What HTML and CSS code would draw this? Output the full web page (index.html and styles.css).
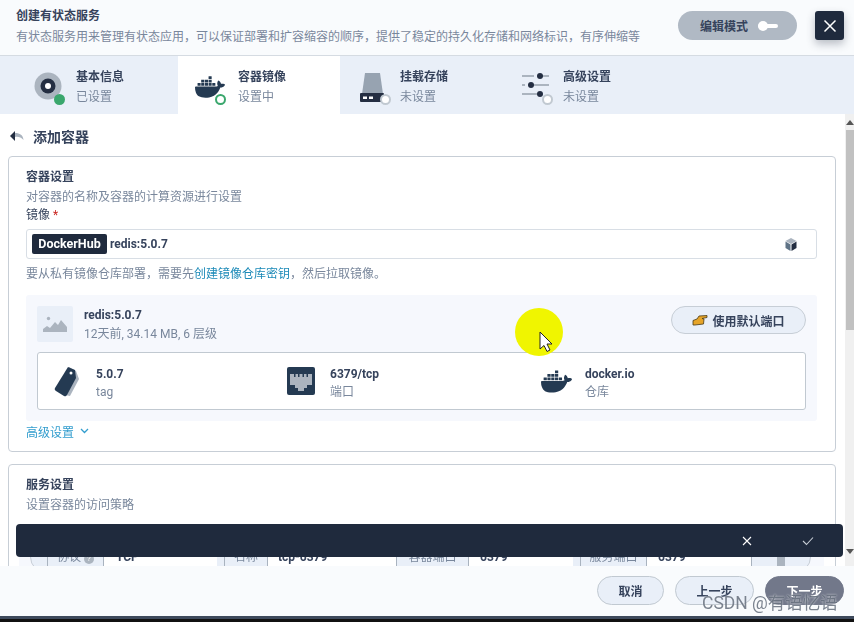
FILE: index.html
```html
<!DOCTYPE html>
<html>
<head>
  <title>创建有状态服务</title>
  <link rel="stylesheet" href="styles.css">
</head>
<body>
  <svg class="defs" width="0" height="0">
    <symbol id="docker" viewBox="0 0 24 24">
      <path d="M13.983 11.078h2.119a.186.186 0 00.186-.185V9.006a.186.186 0 00-.186-.186h-2.119a.185.185 0 00-.185.185v1.888c0 .102.083.185.185.185m-2.954-5.43h2.118a.186.186 0 00.186-.186V3.574a.186.186 0 00-.186-.185h-2.118a.185.185 0 00-.185.185v1.888c0 .102.082.185.185.186m0 2.716h2.118a.187.187 0 00.186-.186V6.29a.186.186 0 00-.186-.185h-2.118a.185.185 0 00-.185.185v1.887c0 .102.082.185.185.186m-2.93 0h2.12a.186.186 0 00.184-.186V6.29a.185.185 0 00-.185-.185H8.1a.185.185 0 00-.185.185v1.887c0 .102.083.185.185.186m-2.964 0h2.119a.186.186 0 00.185-.186V6.29a.185.185 0 00-.185-.185H5.136a.186.186 0 00-.186.185v1.887c0 .102.084.185.186.186m5.893 2.715h2.118a.186.186 0 00.186-.185V9.006a.186.186 0 00-.186-.186h-2.118a.185.185 0 00-.185.185v1.888c0 .102.082.185.185.185m-2.93 0h2.12a.185.185 0 00.184-.185V9.006a.185.185 0 00-.184-.186h-2.12a.185.185 0 00-.184.185v1.888c0 .102.083.185.185.185m-2.964 0h2.119a.185.185 0 00.185-.185V9.006a.185.185 0 00-.184-.186h-2.12a.186.186 0 00-.186.186v1.887c0 .102.084.185.186.185m-2.92 0h2.12a.185.185 0 00.184-.185V9.006a.185.185 0 00-.184-.186h-2.12a.185.185 0 00-.184.185v1.888c0 .102.082.185.185.185M23.763 9.89c-.065-.051-.672-.51-1.954-.51-.338.001-.676.03-1.01.087-.248-1.7-1.653-2.53-1.716-2.566l-.344-.199-.226.327c-.284.438-.49.922-.612 1.43-.23.97-.09 1.882.403 2.661-.595.332-1.55.413-1.744.42H.751a.751.751 0 00-.75.748 11.376 11.376 0 00.692 4.062c.545 1.428 1.355 2.48 2.41 3.124 1.18.723 3.1 1.137 5.275 1.137.983.003 1.963-.086 2.93-.266a12.248 12.248 0 003.823-1.389c.98-.567 1.86-1.288 2.61-2.136 1.252-1.418 1.998-2.997 2.553-4.4h.221c1.372 0 2.215-.549 2.68-1.009.309-.293.55-.65.707-1.046l.098-.288Z"/>
    </symbol>
  </svg>

  <div class="page">
    <header class="head">
      <div class="head-text">
        <div class="head-title">创建有状态服务</div>
        <div class="head-desc">有状态服务用来管理有状态应用，可以保证部署和扩容缩容的顺序，提供了稳定的持久化存储和网络标识，有序伸缩等</div>
      </div>
      <div class="mode-btn">
        <span>编辑模式</span>
        <span class="mode-toggle"></span>
      </div>
      <div class="close-btn">
        <svg width="14" height="14" viewBox="0 0 14 14"><path d="M1.5 1.5l11 11M12.5 1.5l-11 11" stroke="#fff" stroke-width="1.5" fill="none"/></svg>
      </div>
    </header>

    <nav class="tabs">
      <div class="tab tab-first">
        <span class="tab-icon">
          <svg width="30" height="30" viewBox="0 0 30 30"><circle cx="14" cy="14" r="13.5" fill="#abb4bf"/><circle cx="14" cy="14" r="7.5" fill="#242e42"/><circle cx="14" cy="14" r="3" fill="#fff"/></svg>
          <i class="dot dot-done"></i>
        </span>
        <div><div class="tab-name">基本信息</div><div class="tab-state">已设置</div></div>
      </div>
      <div class="tab tab-active">
        <span class="tab-icon">
          <svg class="whale" width="30" height="30"><use href="#docker"/></svg>
          <i class="dot dot-doing"></i>
        </span>
        <div><div class="tab-name">容器镜像</div><div class="tab-state">设置中</div></div>
      </div>
      <div class="tab tab-plain">
        <span class="tab-icon">
          <svg width="30" height="32" viewBox="0 0 30 32"><path d="M5 1h15l3 21H2z" fill="#97a3b1"/><rect x="0" y="21" width="24" height="9" rx="1" fill="#242e42"/><rect x="3" y="24.500" width="4" height="2.500" fill="#fff"/><rect x="9" y="24.500" width="4" height="2.500" fill="#fff"/></svg>
          <i class="dot dot-todo"></i>
        </span>
        <div><div class="tab-name">挂载存储</div><div class="tab-state">未设置</div></div>
      </div>
      <div class="tab tab-plain tab-last">
        <span class="tab-icon">
          <svg width="30" height="30" viewBox="0 0 30 30" fill="none" stroke="#abb4bf" stroke-width="2"><path d="M0 4h12M20 4h7M0 13h3M11 13h16M0 22h15"/><g fill="#242e42" stroke="none"><circle cx="18" cy="4" r="3"/><circle cx="9" cy="13" r="3"/><circle cx="18" cy="22" r="3"/></g></svg>
          <i class="dot dot-todo"></i>
        </span>
        <div><div class="tab-name">高级设置</div><div class="tab-state">未设置</div></div>
      </div>
    </nav>

    <div class="main">
      <div class="scroll-area">
        <div class="back-row">
          <svg width="14" height="10" viewBox="0 0 14 10"><path d="M5 0v10L0 5z" fill="#242e42"/><path d="M5 2c5 0 8 2 8.500 7C11 6 8 5.500 5 6z" fill="#abb4bf"/></svg>
          <span>添加容器</span>
        </div>

        <section class="card card-container">
          <div class="card-title">容器设置</div>
          <div class="card-desc">对容器的名称及容器的计算资源进行设置</div>
          <div class="field-label">镜像 <em>*</em></div>
          <div class="image-input">
            <span class="hub-tag">DockerHub</span>
            <span class="image-value">redis:5.0.7</span>
            <svg class="cube" width="12" height="13" viewBox="0 0 12 13"><path d="M6 0l5.500 3L6 6 .5 3z" fill="#abb4bf"/><path d="M.5 3.500L5.500 6.500V13L.5 10z" fill="#5f7386"/><path d="M11.500 3.500L6.500 6.500V13l5-3z" fill="#242e42"/></svg>
          </div>
          <div class="hint">要从私有镜像仓库部署，需要先<a>创建镜像仓库密钥</a>，然后拉取镜像。</div>

          <div class="image-box">
            <div class="image-top">
              <div class="thumb">
                <svg width="24" height="18" viewBox="0 0 24 18"><circle cx="5.500" cy="3.500" r="1.700" fill="#abb4bf"/><path d="M0 17v-3l4-3 3 2 5-6 3 3 3-5 6 7v5z" fill="#abb4bf"/></svg>
              </div>
              <div class="image-info">
                <div class="strong">redis:5.0.7</div>
                <div class="muted">12天前, 34.14 MB, 6 层级</div>
              </div>
              <div class="port-btn">
                <svg width="16" height="12" viewBox="0 0 16 12"><path d="M1 6.500L5 5l2-3 8-.5V3.500l-5 1 2 .5-.5 5L3 11H1z" fill="#e6a428" stroke="#4a3a14" stroke-width=".8"/></svg>
                <span>使用默认端口</span>
              </div>
            </div>
            <div class="image-meta">
              <div class="meta-item meta-tag">
                <svg width="26" height="31" viewBox="0 0 26 31"><path d="M15 1l7 4 3 8-9 17-5-1z" fill="#abb4bf"/><path d="M14 1l7 3 1 8-9 17c-1 1.500-2 1.500-3 1L2 25c-1.500-1-1.500-2-1-3z" fill="#243a52"/><circle cx="17" cy="7" r="1.500" fill="#fff"/></svg>
                <div class="meta-text"><div class="strong">5.0.7</div><div class="muted">tag</div></div>
              </div>
              <div class="meta-item meta-port">
                <svg width="28" height="28" viewBox="0 0 28 28"><rect width="28" height="28" rx="2" fill="#243a52"/><path d="M3 7h22v11h-5v3h-3v3h-6v-3H8v-3H3z" fill="#abb4bf"/><path d="M7 7h1.500v3H7zM11 7h1.500v3H11zM15.500 7H17v3h-1.500zM19.500 7H21v3h-1.500z" fill="#243a52"/></svg>
                <div class="meta-text"><div class="strong">6379/tcp</div><div class="muted">端口</div></div>
              </div>
              <div class="meta-item meta-repo">
                <svg class="whale" width="31" height="31"><use href="#docker"/></svg>
                <div class="meta-text"><div class="strong">docker.io</div><div class="muted">仓库</div></div>
              </div>
            </div>
          </div>

          <div class="advanced">
            <span>高级设置</span>
            <svg width="9" height="6" viewBox="0 0 9 6"><path d="M1 1l3.500 3.500L8 1" stroke="#329dce" stroke-width="1.300" fill="none"/></svg>
          </div>
        </section>

        <section class="card card-service">
          <div class="card-title">服务设置</div>
          <div class="card-desc">设置容器的访问策略</div>
          <div class="port-wrap">
            <div class="port-row">
              <span class="cell-label label-proto">协议 <i class="help">?</i></span>
              <span class="cell-value value-proto">TCP</span>
              <span class="cell-label label-name">名称</span>
              <span class="cell-value value-name">tcp-6379</span>
              <span class="cell-label label-port">容器端口</span>
              <span class="cell-value value-port">6379</span>
              <span class="cell-label label-svc">服务端口</span>
              <span class="cell-value value-svc">6379</span>
              <span class="cell-del"><i></i></span>
            </div>
          </div>
        </section>
      </div>

      <div class="scrollbar">
        <i class="arrow-up"></i>
        <div class="thumb-bar"></div>
        <i class="arrow-down"></i>
      </div>

      <div class="toast">
        <svg width="10" height="10" viewBox="0 0 10 10"><path d="M1 1l8 8M9 1l-8 8" stroke="#fff" stroke-width="1.100" fill="none"/></svg>
        <svg width="12" height="10" viewBox="0 0 12 10"><path d="M1 5l3.500 3.500L11 1.500" stroke="#c8ced6" stroke-width="1.100" fill="none"/></svg>
      </div>
    </div>

    <footer class="foot">
      <button class="btn">取消</button>
      <button class="btn btn-wide">上一步</button>
      <button class="btn btn-wide btn-next">下一步</button>
    </footer>
    <div class="taskbar"></div>
  </div>

  <div class="cursor-spot">
    <svg width="14" height="22" viewBox="0 0 14 22"><path d="M1 1v17l4-3.500 3 6 3-1.500-3-6h5z" fill="#fff" stroke="#222" stroke-width="1"/></svg>
  </div>
  <div class="watermark">CSDN @有语忆语</div>
</body>
</html>
```

FILE: styles.css
```css
* {
  box-sizing: border-box;
}

html, body {
  height: 100%;
}

body {
  margin: 0;
  overflow: hidden;
  font-family: Roboto, "Noto Sans CJK SC", sans-serif;
  font-size: 12px;
  color: #242e42;
  background: #fff;
}

.defs {
  position: absolute;
}

/* the capture is slightly soft */
.page {
  display: flex;
  flex-direction: column;
  height: 622px;
  filter: blur(0.4px);
}

/* header */
.head {
  display: flex;
  align-items: flex-start;
  flex: none;
  height: 56px;
  padding: 11px 10px 0 16px;
  background: #f9fbfd;
  border-bottom: 1px solid #d5dbe2;
}

.head-text {
  flex: 1;
  margin-top: -4px;
}

.head-title {
  font-weight: 700;
  line-height: 18px;
  color: #36435c;
}

.head-desc {
  margin-top: 3px;
  line-height: 18px;
  color: #79879c;
}

.mode-btn {
  display: flex;
  align-items: center;
  width: 119px;
  height: 29px;
  padding-left: 22px;
  border-radius: 15px;
  background: #b0b9c4;
  font-weight: 700;
  color: #36435c;
}

.mode-toggle {
  position: relative;
  width: 20px;
  height: 4px;
  margin-left: 10px;
  border-radius: 2px;
  background: #fff;
}

.mode-toggle::before {
  content: "";
  position: absolute;
  left: 0;
  top: -3px;
  width: 10px;
  height: 10px;
  border-radius: 50%;
  background: #fff;
}

.close-btn {
  display: flex;
  align-items: center;
  justify-content: center;
  width: 29px;
  height: 29px;
  margin-left: 18px;
  border-radius: 3px;
  background: #1f2a3d;
  box-shadow: 0 4px 8px rgba(36, 46, 66, 0.3);
}

/* steps */
.tabs {
  display: flex;
  flex: none;
  height: 58px;
  background: #e9eff8;
}

.tab {
  display: flex;
  align-items: center;
  gap: 12px;
  width: 162px;
  padding-top: 4px;
  padding-left: 20px;
  line-height: 20px;
}

.tab-first {
  width: 178px;
  padding-left: 34px;
}

.tab-active {
  gap: 13px;
  padding-left: 17px;
  background: #fff;
}

.tab-plain {
  gap: 10px;
}

.tab-last {
  gap: 11px;
}

.tab-icon {
  position: relative;
  display: block;
  width: 30px;
  height: 30px;
}

.tab-name {
  font-weight: 700;
  color: #36435c;
}

.tab-state {
  color: #79879c;
}

.whale {
  fill: #243a52;
}

.dot {
  position: absolute;
  right: -1px;
  bottom: -3px;
  width: 11px;
  height: 11px;
  border-radius: 50%;
}

.dot-done {
  background: #3aa76d;
}

.dot-doing {
  background: #fff;
  border: 2px solid #3aa76d;
}

.dot-todo {
  background: #fff;
  border: 2px solid #c1c9d1;
}

/* main area */
.main {
  position: relative;
  display: flex;
  flex: none;
  height: 452px;
  overflow: hidden;
}

.scroll-area {
  flex: 1;
  padding: 0 9px 0 8px;
  overflow: hidden;
}

.back-row {
  display: flex;
  align-items: center;
  gap: 9px;
  height: 42px;
  padding: 2px 0 0 2px;
  font-size: 14px;
  font-weight: 700;
  color: #36435c;
}

.card {
  padding: 11px 18px 11px 17px;
  border: 1px solid #c7ced6;
  border-radius: 4px;
  background: #fff;
}

.card-container {
  height: 296px;
}

.card-service {
  margin-top: 12px;
  height: 120px;
}

.card-title {
  font-weight: 700;
  line-height: 18px;
  color: #36435c;
}

.card-desc {
  margin-top: 2px;
  line-height: 18px;
  color: #79879c;
}

.field-label {
  line-height: 18px;
  color: #36435c;
}

.field-label em {
  font-style: normal;
  color: #ca2621;
}

.image-input {
  display: flex;
  align-items: center;
  height: 30px;
  margin-top: 5px;
  padding: 0 19px 0 5px;
  border: 1px solid #d8dee5;
  border-radius: 3px;
}

.hub-tag {
  width: 75px;
  height: 20px;
  border-radius: 2px;
  background: #1f2a3d;
  color: #fff;
  font-size: 12.5px;
  font-weight: 700;
  line-height: 20px;
  text-align: center;
}

.image-value {
  flex: 1;
  margin-left: 3px;
  font-weight: 700;
  color: #36435c;
}

.hint {
  margin-top: 6px;
  line-height: 18px;
  color: #79879c;
}

.hint a {
  color: #1c8ab8;
}

.image-box {
  height: 126px;
  margin-top: 12px;
  padding: 11px 11px 0;
  border-radius: 3px;
  background: #f6f8fd;
}

.image-top {
  display: flex;
  align-items: flex-start;
  height: 36px;
}

.thumb {
  display: flex;
  align-items: center;
  justify-content: center;
  width: 36px;
  height: 36px;
  border-radius: 2px;
  background: #e9eff8;
}

.image-info {
  flex: 1;
  margin-left: 11px;
  line-height: 19px;
}

.strong {
  font-weight: 700;
  color: #36435c;
}

.muted {
  color: #79879c;
}

.port-btn {
  display: flex;
  align-items: center;
  justify-content: center;
  gap: 4px;
  width: 135px;
  height: 28px;
  border: 1px solid #c7ced6;
  border-radius: 14px;
  background: #e9eff8;
  font-weight: 700;
  color: #36435c;
}

.image-meta {
  display: flex;
  align-items: center;
  height: 58px;
  margin-top: 10px;
  padding-left: 16px;
  border: 1px solid #c1c9d1;
  border-radius: 3px;
  background: #fff;
  line-height: 18px;
}

.meta-item {
  display: flex;
  align-items: center;
  gap: 16px;
}

.meta-text {
  padding-top: 4px;
}

.meta-tag {
  width: 233px;
}

.meta-port {
  width: 254px;
  gap: 15px;
}

.meta-repo {
  gap: 13px;
}

.advanced {
  display: flex;
  align-items: center;
  gap: 6px;
  height: 20px;
  color: #329dce;
}

/* port row, mostly under the toast */
.port-wrap {
  height: 60px;
  margin: 20px -7px 0 -7px;
  padding: 7px 13px 0 11px;
  background: #f6f8fd;
}

.port-row {
  display: flex;
  align-items: stretch;
  height: 32px;
  padding-left: 16px;
  border: 1px solid #c7ced6;
  border-radius: 16px;
  background: #e9eff8;
  line-height: 20px;
  text-align: center;
}

.cell-label {
  padding-top: 5px;
  border-left: 1px solid #a9b3bf;
  border-right: 1px solid #a9b3bf;
  color: #79879c;
}

.cell-value {
  padding: 5px 0 0 11px;
  background: #fff;
  font-weight: 700;
  text-align: left;
  color: #36435c;
}

.label-proto {
  width: 57px;
}

.value-proto {
  width: 113px;
  margin-right: 7px;
  padding-left: 12px;
}

.label-name {
  width: 44px;
}

.value-name {
  width: 128px;
  padding-left: 10px;
}

.label-port {
  width: 73px;
}

.value-port {
  width: 104px;
  margin-right: 7px;
}

.label-svc {
  width: 67px;
}

.value-svc {
  width: 104px;
}

.cell-del {
  flex: 1;
  display: flex;
  justify-content: center;
  padding-top: 12px;
  border-left: 1px solid #a9b3bf;
}

.cell-del i {
  width: 8px;
  height: 14px;
  background: #abb4bf;
}

.help {
  display: inline-block;
  width: 10px;
  height: 10px;
  border-radius: 50%;
  background: #abb4bf;
  color: #fff;
  font-size: 8px;
  font-style: normal;
  line-height: 10px;
}

.scrollbar {
  display: flex;
  flex-direction: column;
  align-items: flex-end;
  flex: none;
  width: 9px;
  background: #f0f0f0;
}

.arrow-up,
.arrow-down {
  width: 0;
  height: 0;
  margin: 6px 0 5px;
  border-left: 4px solid transparent;
  border-right: 4px solid transparent;
}

.arrow-up {
  border-bottom: 5px solid #555;
}

.arrow-down {
  margin: 0 0 4px;
  border-top: 5px solid #555;
}

.thumb-bar {
  width: 8px;
  height: 200px;
  margin-bottom: 219px;
  background: #c1c1c1;
}

.toast {
  position: absolute;
  left: 16px;
  top: 410px;
  display: flex;
  align-items: center;
  justify-content: flex-end;
  gap: 50px;
  width: 827px;
  height: 33px;
  padding-right: 29px;
  border-radius: 4px;
  background: #1f2a3d;
}

/* footer */
.foot {
  display: flex;
  justify-content: flex-end;
  gap: 11px;
  flex: none;
  height: 50px;
  padding: 10px 10px 0 0;
  background: #f9fbfd;
}

.btn {
  width: 67px;
  height: 29px;
  padding: 0;
  border: 1px solid #c1c9d1;
  border-radius: 15px;
  background: #e9eff8;
  font: 700 12px Roboto, "Noto Sans CJK SC", sans-serif;
  color: #36435c;
}

.btn-wide {
  width: 79px;
}

.btn-next {
  border-color: #72788a;
  background: #72788a;
  color: #fff;
}

.taskbar {
  flex: none;
  height: 6px;
  border-top: 3px solid #3e4a5c;
  background: #111;
}

/* overlays */
.cursor-spot {
  position: absolute;
  left: 515px;
  top: 308px;
  width: 48px;
  height: 48px;
  padding: 23px 0 0 24px;
  border-radius: 50%;
  background: #f0f500;
}

.cursor-spot svg {
  display: block;
}

.watermark {
  position: absolute;
  left: 702px;
  top: 592px;
  font-size: 17.5px;
  line-height: 22px;
  color: rgba(90, 100, 115, 0.8);
  text-shadow: 0 0 2px rgba(255, 255, 255, 0.8);
}
```
